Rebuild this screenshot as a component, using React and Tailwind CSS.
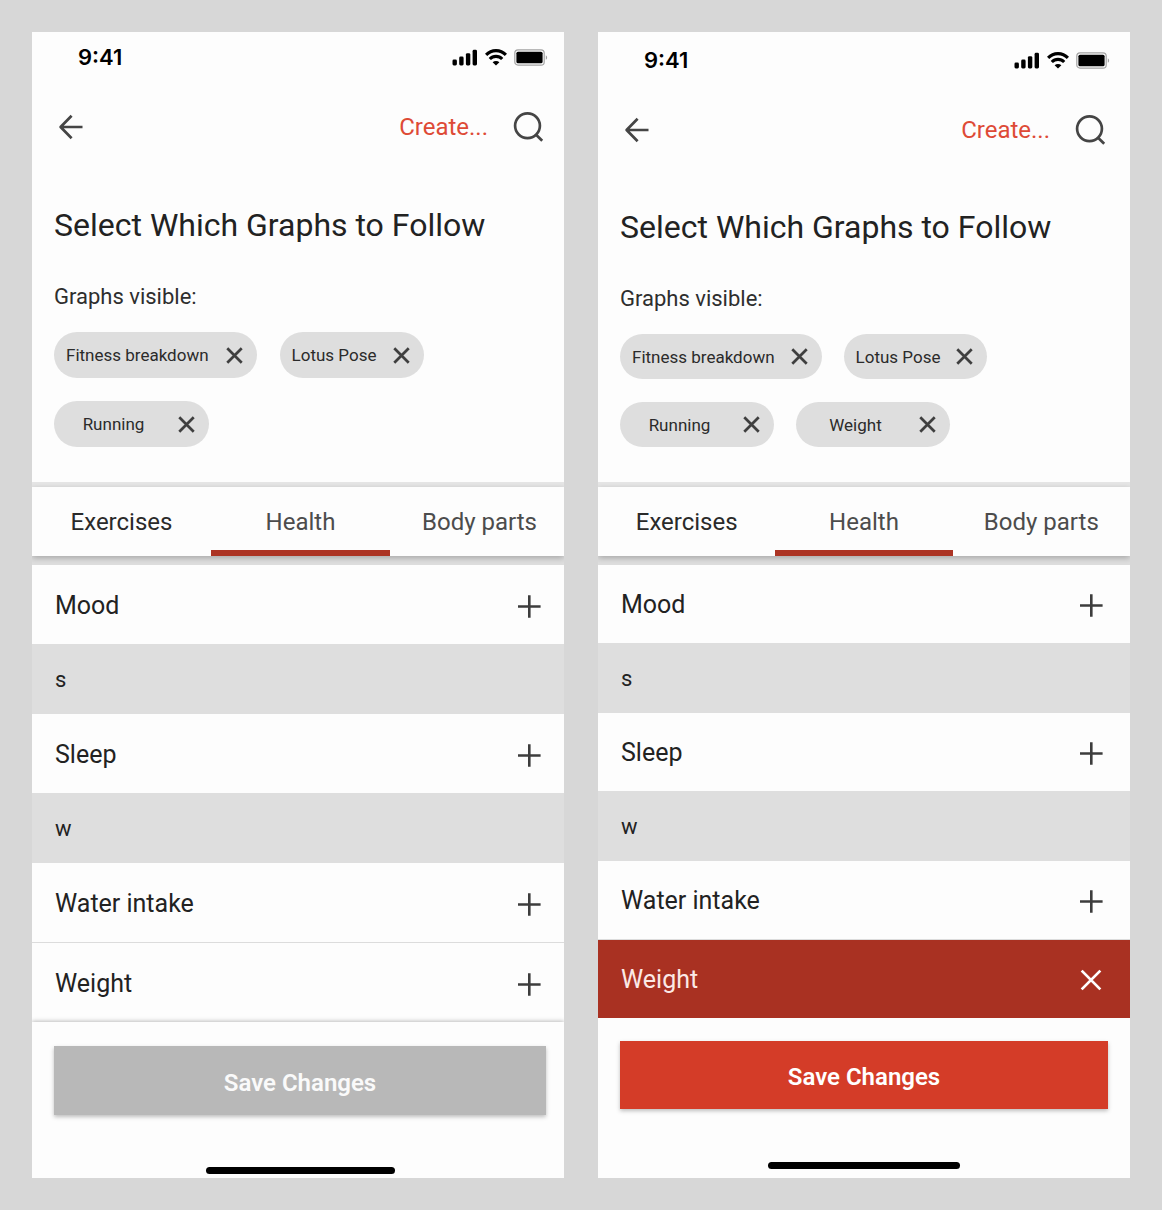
import { useState } from "react";
import { clsx } from "clsx";

const LEFT = {
  id: "before",
  graphs: ["Fitness breakdown", "Lotus Pose", "Running"],
  selected: false,
  statusBar: "h-[50px] pr-4",
  header: "h-[90px] pr-5",
  title: "pt-[33px]",
  chipArea: "gap-[23px] pb-[35px]",
  chip: "h-[46px]",
  wideChip: "min-w-[155px]",
  chipGap: "ml-[17px]",
  tabs: "-mr-[5px]",
  row: "h-[79px] pr-[22px]",
  letter: "h-[70px]",
  footer: "pt-6 pl-[22px] pr-[18px]",
  save: "h-[69px]",
  homeGap: "pt-[52px] pb-1 pl-[5px]",
};

const RIGHT = {
  id: "after",
  graphs: ["Fitness breakdown", "Lotus Pose", "Running", "Weight"],
  selected: true,
  statusBar: "h-[56px] pr-5",
  header: "h-[84px] pr-6",
  title: "pt-[35px]",
  chipArea: "gap-x-[22px] gap-y-[23px] pb-[35px]",
  chip: "h-[45px]",
  wideChip: "min-w-[154px]",
  chipGap: "ml-4",
  tabs: "",
  row: "h-[78px] pr-[26px]",
  letter: "h-[70px]",
  footer: "pt-[23px] px-[22px]",
  save: "h-[68px]",
  homeGap: "pt-[53px] pb-[9px]",
};

const SECTIONS = [
  { letter: null, items: ["Mood"] },
  { letter: "s", items: ["Sleep"] },
  { letter: "w", items: ["Water intake", "Weight"] },
];

const TABS = ["Exercises", "Health", "Body parts"];

function SignalIcon() {
  return (
    <svg width="26" height="17" viewBox="0 0 26 17" aria-hidden="true">
      <rect x="0.5" y="10.5" width="4.4" height="6" rx="1.4" />
      <rect x="7.2" y="7.6" width="4.4" height="8.9" rx="1.4" />
      <rect x="13.9" y="4.2" width="4.4" height="12.3" rx="1.4" />
      <rect x="20.6" y="0.8" width="4.4" height="15.7" rx="1.4" />
    </svg>
  );
}

function WifiIcon() {
  return (
    <svg width="22" height="17" viewBox="0 0 22 17" aria-hidden="true">
      <g fill="none" stroke="#000" strokeWidth="3.1">
        <path d="M1.1 5.9 A13.6 13.6 0 0 1 20.9 5.9" />
        <path d="M4.8 10 A8.6 8.6 0 0 1 17.2 10" />
      </g>
      <path d="M11 16.6 L7.6 13.3 A4.9 4.9 0 0 1 14.4 13.3 Z" />
    </svg>
  );
}

function BatteryIcon() {
  return (
    <svg width="34" height="17" viewBox="0 0 34 17" aria-hidden="true">
      <rect x="0.8" y="0.9" width="29.4" height="15.2" rx="3.2" fill="none" stroke="#a3a3a3" strokeWidth="1.2" />
      <rect x="2.4" y="2.7" width="26.2" height="11.6" rx="1.6" />
      <path d="M31.8 6.2 C33.6 6.9 33.6 10 31.8 10.8 Z" fill="#a3a3a3" />
    </svg>
  );
}

function BackIcon() {
  return (
    <svg width="26" height="26" viewBox="0 0 26 26" fill="none" stroke="#454545" strokeWidth="2.7" aria-hidden="true">
      <path d="M24.5 13 H3 M13.6 1.8 L2.6 13 L13.6 24.2" strokeLinejoin="round" />
    </svg>
  );
}

function SearchIcon() {
  return (
    <svg width="32" height="32" viewBox="0 0 32 32" fill="none" stroke="#454545" strokeWidth="2.7" aria-hidden="true">
      <circle cx="15.5" cy="14.8" r="12.4" />
      <path d="M23.6 23.2 L30.2 29.8" />
    </svg>
  );
}

function PlusIcon() {
  return (
    <svg width="26" height="26" viewBox="0 0 26 26" fill="none" stroke="#3d3d3d" strokeWidth="2.6" aria-hidden="true">
      <path d="M13.3 2.2 V24.8 M2 13.5 H24.6" />
    </svg>
  );
}

function CrossIcon({ size, color, weight }) {
  return (
    <svg width={size} height={size} viewBox="0 0 20 20" fill="none" stroke={color} strokeWidth={weight} aria-hidden="true">
      <path d="M1.5 1.5 L18.5 18.5 M18.5 1.5 L1.5 18.5" />
    </svg>
  );
}

function Chip({ label, config }) {
  const short = label.length <= 8;
  return (
    <li className={clsx("flex items-center rounded-full bg-[#dedede] pr-[14px] pl-3", config.chip, short && config.wideChip)}>
      <span className={clsx("text-[17px] leading-6 text-[#2b2b2b]", short && "grow text-center")}>{label}</span>
      <button type="button" aria-label={`Remove ${label}`} className={clsx("flex", config.chipGap)}>
        <CrossIcon size={17} color="#3f3f3f" weight={3.2} />
      </button>
    </li>
  );
}

function Row({ label, selected, className }) {
  return (
    <div
      className={clsx(
        "flex items-center justify-between pt-0.5 pl-[23px] text-[25px]",
        className,
        selected ? "bg-[#a93122] text-[#fbe9e6]" : "bg-[#fdfdfd] text-[#222]",
      )}
    >
      <span>{label}</span>
      <button type="button" aria-label={`${selected ? "Remove" : "Add"} ${label}`} className="flex w-[26px] justify-center">
        {selected ? <CrossIcon size={22} color="#fff" weight={2.5} /> : <PlusIcon />}
      </button>
    </div>
  );
}

function Phone({ config }) {
  const [tab, setTab] = useState("Health");
  return (
    <section className="flex flex-col overflow-hidden bg-[#fdfdfd] font-['Roboto',Arial,sans-serif]">
      <div className={clsx("flex items-center justify-between pl-[46px]", config.statusBar)}>
        <span className="font-['Inter',sans-serif] text-[22px] font-semibold text-black">9:41</span>
        <div className="flex items-center gap-[7px]">
          <SignalIcon />
          <WifiIcon />
          <BatteryIcon />
        </div>
      </div>

      <header className={clsx("flex items-center justify-between pl-[26px]", config.header)}>
        <button type="button" aria-label="Back" className="flex">
          <BackIcon />
        </button>
        <div className="flex items-center gap-6">
          <button type="button" className="text-2xl text-[#de4a36]">
            Create...
          </button>
          <button type="button" aria-label="Search" className="flex">
            <SearchIcon />
          </button>
        </div>
      </header>

      <div className={clsx("px-[22px]", config.title)}>
        <h1 className="text-[32px] leading-10 whitespace-nowrap text-[#222]">Select Which Graphs to Follow</h1>
        <h2 className="mt-[38px] text-[22px] leading-7 text-[#2e2e2e]">Graphs visible:</h2>
        <ul className={clsx("mt-[21px] flex max-w-[390px] flex-wrap", config.chipArea)}>
          {config.graphs.map((g) => (
            <Chip key={g} label={g} config={config} />
          ))}
        </ul>
      </div>

      <div className="h-[5px] bg-[#e6e6e6]" />
      <div className="relative shadow-[0_2px_6px_rgba(0,0,0,0.25)]">
        <nav role="tablist" className={clsx("grid h-[69px] grid-cols-3 bg-[#fdfdfd]", config.tabs)}>
          {TABS.map((t) => (
            <button
              key={t}
              type="button"
              role="tab"
              aria-selected={tab === t}
              onClick={() => setTab(t)}
              className={clsx(
                "border-b-[6px] pt-1.5 text-2xl",
                tab === t ? "border-[#ac3424]" : "border-transparent",
                t === "Exercises" ? "text-[#2a2a2a]" : "text-[#4c4c4c]",
              )}
            >
              {t}
            </button>
          ))}
        </nav>
      </div>
      <div className="h-[9px] bg-[#dedede]" />

      <div className="relative">
        {SECTIONS.map(({ letter, items }) => (
          <div key={items[0]}>
            {letter && (
              <h3 className={clsx("flex items-center bg-[#dedede] pl-[23px] text-[22px] text-[#222]", config.letter)}>{letter}</h3>
            )}
            {items.map((item, i) => (
              <div key={item} className={clsx(i > 0 && "border-t border-[#dcdcdc]")}>
                <Row label={item} selected={config.selected && item === "Weight"} className={config.row} />
              </div>
            ))}
          </div>
        ))}
      </div>

      <footer className={clsx("relative", !config.selected && "shadow-[0_-1px_4px_rgba(0,0,0,0.25)]")}>
        <div className={config.footer}>
          <button
            type="button"
            disabled={!config.selected}
            className={clsx(
              "w-full pt-1 text-2xl font-semibold shadow-[0_2px_4px_rgba(0,0,0,0.25)]",
              config.save,
              config.selected ? "bg-[#d43c28] text-white" : "bg-[#b8b8b8] text-[#fafafa]",
            )}
          >
            Save Changes
          </button>
        </div>
        <div className={clsx("flex justify-center", config.homeGap)}>
          <div className="h-[7px] w-[36%] rounded-full bg-black" />
        </div>
      </footer>
    </section>
  );
}

export default function App() {
  return (
    <main className="grid min-h-screen grid-cols-2 gap-[34px] bg-[#d7d7d7] p-8">
      <Phone config={LEFT} />
      <Phone config={RIGHT} />
    </main>
  );
}
